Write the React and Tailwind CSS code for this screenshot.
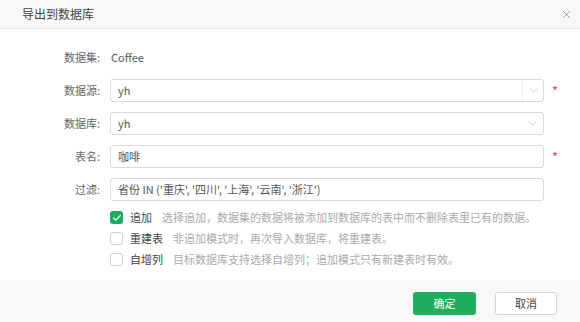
import React from 'react'
import { X, ChevronDown, Check } from 'lucide-react'

const FONT = "font-['Noto_Sans_CJK_SC','Noto_Sans',sans-serif]"

function Field({ label, children, required }) {
  return (
    <div className="flex h-[23px] items-center">
      <div className="w-[101px] shrink-0 pr-[1px] text-right text-[11px] text-[#666]">{label}</div>
      <div className="ml-[9px] w-[434px] shrink-0 h-full">{children}</div>
      {required && <span className="ml-[8px] text-[13px] leading-none text-[#f04646]">*</span>}
    </div>
  )
}

function TextBox({ value }) {
  return (
    <div className="flex h-full items-center rounded-[3px] border border-[#dadada] bg-white px-[7px] text-[11px] text-[#555]">
      {value}
    </div>
  )
}

function Select({ value, divider }) {
  return (
    <div className="flex h-full items-center rounded-[3px] border border-[#dadada] bg-white text-[11px] text-[#555]">
      <span className="flex-1 px-[7px]">{value}</span>
      <div className={`flex h-full w-[21px] items-center justify-center ${divider ? 'border-l border-[#f0f0f0]' : ''}`}>
        <ChevronDown size={13} strokeWidth={1.2} className="text-[#b5b5b5]" />
      </div>
    </div>
  )
}

function Option({ checked, label, desc }) {
  return (
    <div className="flex h-[21px] items-center">
      {checked ? (
        <span className="flex h-[13px] w-[13px] items-center justify-center rounded-[3px] bg-[#1aad5d]">
          <Check size={10} strokeWidth={3} className="text-white" />
        </span>
      ) : (
        <span className="h-[13px] w-[13px] rounded-[3px] border border-[#cfcfcf] bg-white" />
      )}
      <span className="ml-[7px] text-[11px] text-[#444]">{label}</span>
      <span className="ml-[10px] text-[11px] text-[#aaa]">{desc}</span>
    </div>
  )
}

export default function App() {
  return (
    <div className={`flex h-[322px] w-[580px] flex-col bg-white ${FONT}`}>
      {/* Header */}
      <div className="flex h-[29px] shrink-0 items-center justify-between border-b border-[#ececec] bg-[#f8f8f8] pl-[22px] pr-[7px]">
        <span className="text-[12px] text-[#444]">导出到数据库</span>
        <X size={13} strokeWidth={1.3} className="text-[#777]" />
      </div>

      {/* Body */}
      <div className="flex flex-1 flex-col pt-[17px]">
        <div className="flex flex-col gap-[10px]">
          <Field label="数据集:">
            <div className="flex h-full items-center pl-[1px] text-[11px] text-[#555]">Coffee</div>
          </Field>
          <Field label="数据源:" required>
            <Select value="yh" divider />
          </Field>
          <Field label="数据库:">
            <Select value="yh" />
          </Field>
          <Field label="表名:" required>
            <TextBox value="咖啡" />
          </Field>
          <Field label="过滤:">
            <TextBox value="省份 IN ('重庆', '四川', '上海', '云南', '浙江')" />
          </Field>
        </div>
        <div className="mt-[6px] flex flex-col pl-[110px]">
          <Option checked label="追加" desc="选择追加，数据集的数据将被添加到数据库的表中而不删除表里已有的数据。" />
          <Option label="重建表" desc="非追加模式时，再次导入数据库，将重建表。" />
          <Option label="自增列" desc="目标数据库支持选择自增列；追加模式只有新建表时有效。" />
        </div>
      </div>

      {/* Footer */}
      <div className="flex h-[42px] shrink-0 items-start justify-end gap-[19px] bg-[#f8f8f8] pr-[23px] pt-[12px]">
        <button className="h-[23px] w-[63px] rounded-[3px] bg-[#1fae5e] text-[11px] text-white">确定</button>
        <button className="h-[23px] w-[62px] rounded-[3px] border border-[#d6d6d6] bg-white text-[11px] text-[#444]">取消</button>
      </div>
    </div>
  )
}
